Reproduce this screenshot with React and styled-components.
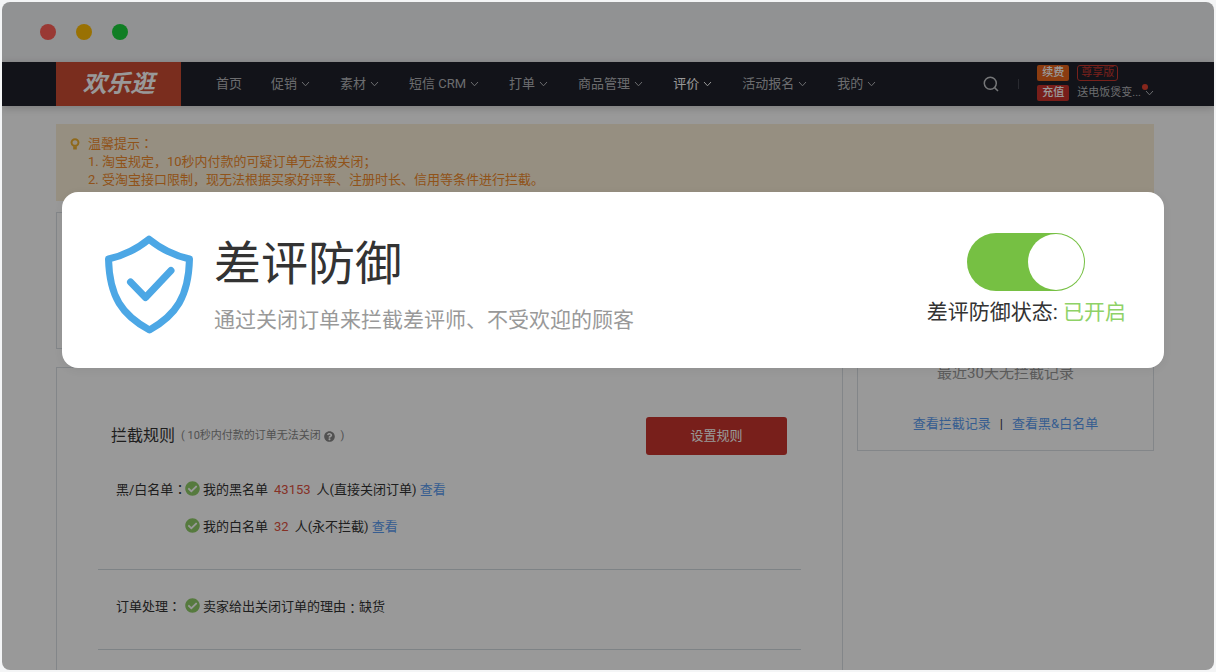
import { useState } from "react";
import styled, { createGlobalStyle } from "styled-components";
import { FaCheckCircle, FaQuestionCircle } from "react-icons/fa";

const GlobalStyle = createGlobalStyle`
  * {
    box-sizing: border-box;
  }

  body {
    margin: 0;
    background: #f4f5f6;
    color: #333;
    font-family: Roboto, "Noto Sans CJK SC", sans-serif;
    font-size: 13px;
    line-height: 18px;
  }

  a {
    color: inherit;
    text-decoration: none;
  }

  h1, h2, p, ul {
    margin: 0;
    padding: 0;
    font-weight: 400;
  }
`;

// Browser window
const Window = styled.div`
  position: relative;
  display: flex;
  flex-direction: column;
  height: calc(100vh - 4px);
  margin: 2px;
  overflow: hidden;
  background: #fff;
  border-radius: 8px;
`;

const TitleBar = styled.div`
  display: flex;
  flex: none;
  align-items: center;
  gap: 20px;
  height: 60px;
  padding: 0 38px;
  background: #f2f3f5;
`;

const Dot = styled.span`
  width: 16px;
  height: 16px;
  border-radius: 50%;
  background: ${(props) => props.$color};
`;

// Top navigation
const Header = styled.header`
  display: flex;
  flex: none;
  height: 44px;
  padding: 0 60px 0 54px;
  background: #1e212a;
  box-shadow: 0 2px 8px rgba(0, 0, 0, 0.2);
`;

const Brand = styled.a`
  display: flex;
  align-items: center;
  justify-content: center;
  width: 125px;
  color: #fff;
  background: #cb4b32;
  font-size: 24px;
  font-style: italic;
  font-weight: 700;
  line-height: 30px;
`;

const Nav = styled.nav`
  display: flex;
  flex: 1;
  align-items: center;
  gap: 29px;
  padding-left: 35px;
`;

const NavItem = styled.a`
  display: flex;
  align-items: center;
  gap: 4px;
  white-space: nowrap;
  && {
    color: ${(props) => (props.$active ? "#fff" : "#b4b5b9")};
  }

  svg {
    margin-right: 1px;
  }
`;

const IconButton = styled.button`
  display: flex;
  align-items: center;
  padding: 0;
  border: 0;
  background: none;
  color: #c4c5c9;
  cursor: pointer;
`;

const Separator = styled.span`
  align-self: center;
  width: 1px;
  height: 10px;
  margin: 0 18px 0 19px;
  background: #454750;
`;

const Account = styled.div`
  display: grid;
  grid-template-columns: auto auto;
  align-content: start;
  gap: 4px 8px;
  padding-top: 3px;
  font-size: 11px;
  line-height: 16px;
`;

const Badge = styled.a`
  width: 32px;
  height: 16px;
  border-radius: 2px;
  background: ${(props) => props.$color};
  text-align: center;
  font-weight: 500;
  && {
    color: #fff;
  }
`;

const Edition = styled.span`
  justify-self: start;
  height: 16px;
  padding: 0 3px;
  border: 1px solid #c9372e;
  border-radius: 3px;
  color: #c9372e;
  line-height: 14px;
`;

const UserMenu = styled.button`
  position: relative;
  display: flex;
  align-items: center;
  gap: 4px;
  padding: 0;
  border: 0;
  background: none;
  color: #b4b5b9;
  font: inherit;
  cursor: pointer;
`;

const Unread = styled.i`
  position: absolute;
  top: -1px;
  right: 6px;
  width: 6px;
  height: 6px;
  border-radius: 50%;
  background: #e0402f;
`;

// Page body
const Main = styled.main`
  display: flex;
  flex: 1;
  flex-direction: column;
  gap: 11px;
  min-height: 0;
  padding: 18px 60px 0 54px;
`;

const Notice = styled.section`
  display: flex;
  flex: none;
  gap: 8px;
  padding: 11px 14px 12px;
  background: #fbefd7;
  color: #f08a2c;
`;

const BulbIcon = styled.svg`
  flex: none;
  width: 10px;
  height: 12px;
  margin-top: 3px;
`;

// Full-width colon set in the middle of its box
const Mark = styled.span`
  font-family: "Noto Sans CJK TC", sans-serif;
  line-height: 1;
`;

const Columns = styled.div`
  display: flex;
  flex: 1;
  align-items: flex-start;
  gap: 14px;
  min-height: 0;
`;

const MainColumn = styled.div`
  display: flex;
  flex: 1;
  flex-direction: column;
  gap: 18px;
  align-self: stretch;
`;

const Panel = styled.section`
  border: 1px solid #dbe0e5;
`;

const SummaryPanel = styled(Panel)`
  flex: none;
  height: 137px;
`;

const RulesPanel = styled(Panel)`
  flex: 1;
  padding: 49px 41px 0;
  border-bottom: 0;
`;

const RecordPanel = styled(Panel)`
  display: flex;
  flex: none;
  flex-direction: column;
  align-items: center;
  justify-content: flex-end;
  gap: 32px;
  width: 297px;
  height: 239px;
  padding-bottom: 17px;
`;

const EmptyText = styled.p`
  color: #999;
  font-size: 15px;
  line-height: 20px;
`;

const RecordLinks = styled.div`
  display: flex;
  gap: 9px;
`;

const TextLink = styled.a`
  && {
    color: #5a9cf0;
  }
`;

const RulesHeader = styled.div`
  display: flex;
  align-items: center;
  padding: 0 14px 0 13px;
`;

const RulesTitle = styled.h2`
  font-size: 16px;
`;

const RulesHint = styled.span`
  display: flex;
  flex: 1;
  align-items: center;
  gap: 3px;
  padding-left: 6px;
  color: #888;
  font-size: 11px;
`;

const SetButton = styled.button`
  width: 141px;
  height: 38px;
  padding: 0;
  border: 0;
  border-radius: 3px;
  background: #c8352d;
  color: #fff;
  font: inherit;
  cursor: pointer;
`;

const RuleGroup = styled.div`
  display: flex;
  padding: 26px 18px 33px;
  border-bottom: 1px solid #d3dae0;

  & + & {
    padding: 28px 18px 33px;
  }
`;

const RuleLabel = styled.div`
  width: 69px;
  white-space: nowrap;
`;

const RuleList = styled.ul`
  display: flex;
  flex-direction: column;
  gap: 19px;
  list-style: none;
`;

const RuleItem = styled.li`
  display: flex;
  align-items: center;
  height: 18px;
`;

const CheckIcon = styled(FaCheckCircle)`
  width: 15px;
  height: 15px;
  margin: 0 3px 3px 0;
  color: #8fcb68;
`;

const Count = styled.span`
  padding: 0 6px;
  color: #e0523f;
`;

// Dimmed layer and the highlighted card on top of it
const Overlay = styled.div`
  position: absolute;
  inset: 0;
  background: rgba(0, 0, 0, 0.4);
`;

const Spotlight = styled.section`
  position: absolute;
  top: 190px;
  right: 50px;
  left: 60px;
  display: flex;
  align-items: flex-start;
  min-height: 176px;
  padding: 41px 38px 30px 43px;
  border-radius: 16px;
  background: #fff;
  box-shadow: 0 2px 10px rgba(0, 0, 0, 0.06);
`;

const Feature = styled.div`
  display: flex;
  flex: 1;
  gap: 21px;
  padding-top: 2px;
`;

const FeatureTitle = styled.h1`
  font-size: 47px;
  line-height: 58px;
`;

const FeatureText = styled.p`
  padding-top: 12px;
  color: #999;
  font-size: 21px;
  line-height: 30px;
`;

const SwitchField = styled.div`
  display: flex;
  flex-direction: column;
  align-items: center;
  gap: 6px;
  font-size: 21px;
  line-height: 30px;
`;

const Switch = styled.input`
  appearance: none;
  width: 118px;
  height: 58px;
  margin: 0;
  padding: 1px;
  border-radius: 30px;
  background: ${(props) => (props.checked ? "#76c043" : "#ccc")};
  cursor: pointer;

  &::before {
    content: "";
    display: block;
    width: 56px;
    height: 56px;
    margin-left: ${(props) => (props.checked ? "auto" : "0")};
    border-radius: 50%;
    background: #fff;
  }
`;

const SwitchState = styled.span`
  color: #8fd267;
`;

const navItems = [
  { label: "首页" },
  { label: "促销", menu: true },
  { label: "素材", menu: true },
  { label: "短信 CRM", menu: true },
  { label: "打单", menu: true },
  { label: "商品管理", menu: true },
  { label: "评价", menu: true, active: true },
  { label: "活动报名", menu: true },
  { label: "我的", menu: true },
];

const Chevron = () => (
  <svg width="9" height="6" viewBox="0 0 9 6" fill="none" stroke="currentColor" aria-hidden="true">
    <path d="M1 1l3.5 3.8L8 1" />
  </svg>
);

const Shield = () => (
  <svg width="88" height="99" viewBox="0 0 88 99" fill="none" stroke="#4ca7e5" strokeLinejoin="round" aria-hidden="true">
    <path
      strokeWidth="7"
      d="M44 4.200C32 14 19 20.500 3.500 24C4.500 62 17 80 44.500 95C71 80 83.500 62 84.500 24C69 20.500 56 14 44 4.200Z"
    />
    <path strokeWidth="7" strokeLinecap="round" d="M25.500 47L40.500 62.500L66 35.500" />
  </svg>
);

export default function App() {
  const [enabled, setEnabled] = useState(true);

  return (
    <>
      <GlobalStyle />
      <Window>
        <TitleBar>
          <Dot $color="#ff5f57" />
          <Dot $color="#ffbd05" />
          <Dot $color="#1bd23c" />
        </TitleBar>

        <Header>
          <Brand href="#">欢乐逛</Brand>
          <Nav>
            {navItems.map((item) => (
              <NavItem key={item.label} href="#" $active={item.active}>
                {item.label}
                {item.menu && <Chevron />}
              </NavItem>
            ))}
          </Nav>
          <IconButton type="button" aria-label="搜索">
            <svg width="16" height="16" viewBox="0 0 16 16" fill="none" stroke="currentColor" strokeWidth="1.500">
              <circle cx="7.300" cy="7.300" r="6" />
              <path d="M11.600 11.600L15 15" />
            </svg>
          </IconButton>
          <Separator />
          <Account>
            <Badge href="#" $color="#e8641b">续费</Badge>
            <Edition>尊享版</Edition>
            <Badge href="#" $color="#c9322c">充值</Badge>
            <UserMenu type="button">
              送电饭煲变...
              <Chevron />
              <Unread />
            </UserMenu>
          </Account>
        </Header>

        <Main>
          <Notice>
            <BulbIcon viewBox="0 0 10 12" fill="none" stroke="#efb02e" aria-hidden="true">
              <path strokeWidth="2" d="M3.800 7.800C2.300 7 1.500 6 1.500 4.700a3.500 3.500 0 0 1 7 0c0 1.300-.8 2.300-2.300 3.100z" />
              <path strokeWidth="3" d="M3.200 9.900h3.600" />
            </BulbIcon>
            <div>
              <p>温馨提示<Mark>：</Mark></p>
              <p>1. 淘宝规定，10秒内付款的可疑订单无法被关闭；</p>
              <p>2. 受淘宝接口限制，现无法根据买家好评率、注册时长、信用等条件进行拦截。</p>
            </div>
          </Notice>

          <Columns>
            <MainColumn>
              <SummaryPanel />
              <RulesPanel>
                <RulesHeader>
                  <RulesTitle>拦截规则</RulesTitle>
                  <RulesHint>
                    ( 10秒内付款的订单无法关闭
                    <FaQuestionCircle size={11} />
                    <span>&nbsp;)</span>
                  </RulesHint>
                  <SetButton type="button">设置规则</SetButton>
                </RulesHeader>
                <RuleGroup>
                  <RuleLabel>黑/白名单<Mark>：</Mark></RuleLabel>
                  <RuleList>
                    <RuleItem>
                      <CheckIcon />
                      我的黑名单
                      <Count>43153</Count>
                      人(直接关闭订单)&nbsp;
                      <TextLink href="#">查看</TextLink>
                    </RuleItem>
                    <RuleItem>
                      <CheckIcon />
                      我的白名单
                      <Count>32</Count>
                      人(永不拦截)&nbsp;
                      <TextLink href="#">查看</TextLink>
                    </RuleItem>
                  </RuleList>
                </RuleGroup>
                <RuleGroup>
                  <RuleLabel>订单处理<Mark>：</Mark></RuleLabel>
                  <RuleList>
                    <RuleItem>
                      <CheckIcon />
                      卖家给出关闭订单的理由<Mark>：</Mark>缺货
                    </RuleItem>
                  </RuleList>
                </RuleGroup>
              </RulesPanel>
            </MainColumn>

            <RecordPanel>
              <EmptyText>最近30天无拦截记录</EmptyText>
              <RecordLinks>
                <TextLink href="#">查看拦截记录</TextLink>
                <span>|</span>
                <TextLink href="#">查看黑&amp;白名单</TextLink>
              </RecordLinks>
            </RecordPanel>
          </Columns>
        </Main>

        <Overlay />

        <Spotlight>
          <Feature>
            <Shield />
            <div>
              <FeatureTitle>差评防御</FeatureTitle>
              <FeatureText>通过关闭订单来拦截差评师、不受欢迎的顾客</FeatureText>
            </div>
          </Feature>
          <SwitchField>
            <Switch
              id="defense"
              type="checkbox"
              role="switch"
              checked={enabled}
              onChange={(e) => setEnabled(e.target.checked)}
            />
            <label htmlFor="defense">
              差评防御状态: <SwitchState>{enabled ? "已开启" : "已关闭"}</SwitchState>
            </label>
          </SwitchField>
        </Spotlight>
      </Window>
    </>
  );
}
